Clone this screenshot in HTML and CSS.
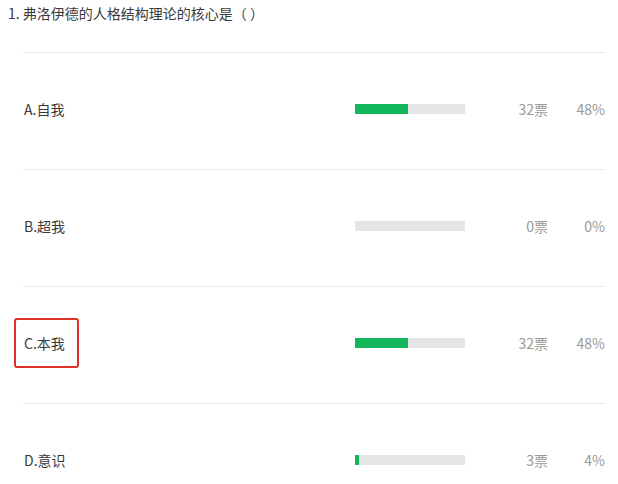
FILE: index.html
```html
<!DOCTYPE html>
<html lang="zh-CN">
<head>
    <meta charset="UTF-8">
    <meta name="viewport" content="width=device-width, initial-scale=1.0">
    <title>投票结果</title>
    <link rel="stylesheet" href="styles.css">
</head>
<body>

<div class="question">
    <div class="question-title">1. 弗洛伊德的人格结构理论的核心是（ ）</div>
    <ul class="option-list">
        <li class="option">
            <span class="option-label">A.自我</span>
            <span class="bar"><span class="bar-fill" style="width: 48%"></span></span>
            <span class="votes">32票</span>
            <span class="percent">48%</span>
        </li>
        <li class="option">
            <span class="option-label">B.超我</span>
            <span class="bar"><span class="bar-fill" style="width: 0%"></span></span>
            <span class="votes">0票</span>
            <span class="percent">0%</span>
        </li>
        <li class="option">
            <span class="option-label"><span class="marked">C.本我</span></span>
            <span class="bar"><span class="bar-fill" style="width: 48%"></span></span>
            <span class="votes">32票</span>
            <span class="percent">48%</span>
        </li>
        <li class="option">
            <span class="option-label">D.意识</span>
            <span class="bar"><span class="bar-fill" style="width: 4%"></span></span>
            <span class="votes">3票</span>
            <span class="percent">4%</span>
        </li>
    </ul>
</div>

</body>
</html>
```

FILE: styles.css
```css
body {
    font-family: "Noto Sans CJK SC", "Liberation Sans", sans-serif;
    font-size: 14px;
    color: #3a3a3a;
    background: #fff;
    margin: 0;
    padding: 0;
}
.question {
    padding: 3px 13px 0 8px;
}
.question-title {
    line-height: 20px;
    height: 49px;
}
.option-list {
    list-style: none;
    margin: 0 0 0 15px;
    padding: 0;
}
.option {
    display: flex;
    align-items: center;
    height: 112px;
    padding-bottom: 4px;
    border-top: 1px solid #ebebeb;
    line-height: 20px;
}
.option-label {
    flex: 1;
    padding-left: 1px;
}
.marked {
    position: relative;
}
.marked::after {
    content: "";
    position: absolute;
    top: -15px;
    bottom: -15px;
    left: -10px;
    right: -14px;
    border: 2px solid #e0302a;
    border-radius: 3px;
}
.bar {
    width: 110px;
    height: 10px;
    background: #e4e5e7;
}
.bar-fill {
    display: block;
    height: 100%;
    background: #13b75b;
}
.votes {
    width: 83px;
    text-align: right;
    color: #999;
}
.percent {
    width: 57px;
    text-align: right;
    color: #999;
}
```
